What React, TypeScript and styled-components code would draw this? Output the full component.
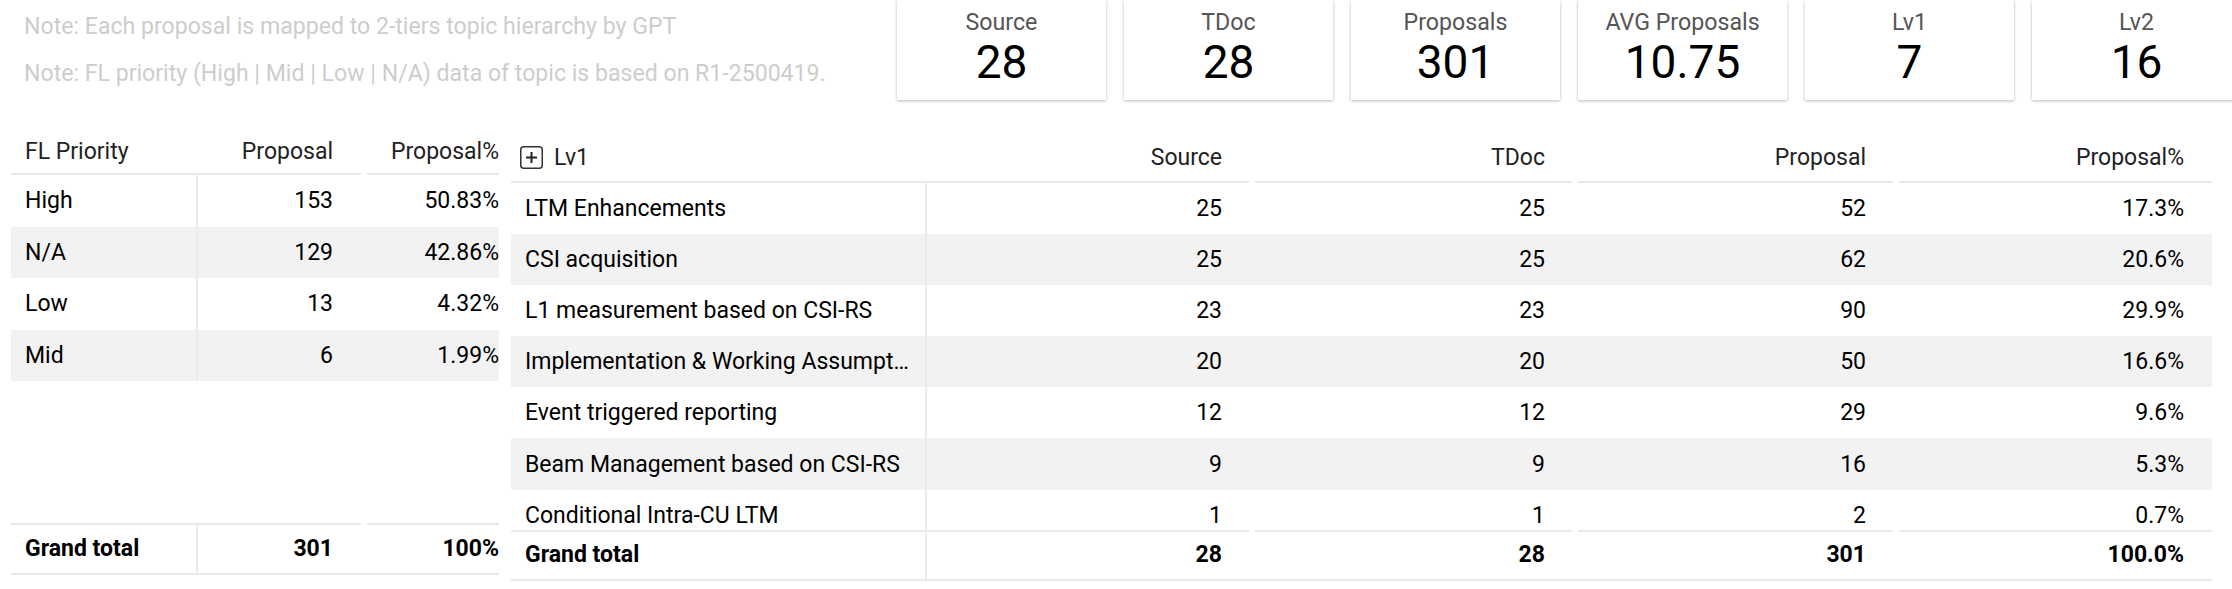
import React from "react";
import styled, { createGlobalStyle } from "styled-components";

const Global = createGlobalStyle`
  html, body { margin: 0; padding: 0; background: #ffffff; }
  body { font-family: Roboto, "Liberation Sans", Arial, sans-serif; overflow: hidden; }
`;

const Page = styled.div`
  width: 2232px;
  height: 589px;
  display: flex;
  flex-direction: column;
  overflow: hidden;
`;

const Top = styled.div`
  display: flex;
  height: 127px;
  flex-shrink: 0;
`;

const Notes = styled.div`
  width: 897px;
  flex-shrink: 0;
  box-sizing: border-box;
  padding: 13.5px 0 0 24px;
  display: flex;
  flex-direction: column;
  gap: 21.5px;
`;

const Note = styled.div`
  font-size: 23.1px;
  line-height: 26px;
  color: #cdcdcd;
  white-space: nowrap;
`;

const Cards = styled.div`
  display: flex;
  gap: 18px;
  align-items: flex-start;
`;

const Card = styled.div`
  width: 209px;
  height: 100px;
  flex-shrink: 0;
  background: #fff;
  box-shadow: 0 1px 3px rgba(0, 0, 0, 0.28);
  display: flex;
  flex-direction: column;
  align-items: center;
  box-sizing: border-box;
  padding-top: 10px;
`;

const CardTitle = styled.div`
  font-size: 23.2px;
  line-height: 24px;
  color: #555555;
  white-space: nowrap;
`;

const CardValue = styled.div`
  margin-top: 3px;
  font-size: 46px;
  line-height: 50px;
  color: #000;
`;

const Bottom = styled.div`
  display: flex;
  align-items: flex-start;
  padding-left: 11px;
  gap: 12px;
`;

const Table = styled.div<{ $w: number; $top: number }>`
  width: ${(p) => p.$w}px;
  height: 448px;
  margin-top: ${(p) => p.$top}px;
  display: flex;
  flex-direction: column;
  flex-shrink: 0;
`;

const Row = styled.div<{ $cols: string; $h: number; $stripe?: boolean; $foot?: boolean }>`
  display: grid;
  grid-template-columns: ${(p) => p.$cols};
  height: ${(p) => p.$h}px;
  flex-shrink: 0;
  box-sizing: border-box;
  background: ${(p) => (p.$stripe ? "#f2f2f2" : "#ffffff")};
  border-bottom: ${(p) => (p.$foot ? "2px solid #e9e9e9" : "none")};
`;

const Spacer = styled.div`
  flex: 1;
`;

const Viewport = styled.div`
  height: 347px;
  overflow: hidden;
  flex-shrink: 0;
`;

const HeadCell = styled.div<{ $num?: boolean; $pr: number; $gap?: boolean }>`
  display: flex;
  align-items: center;
  justify-content: ${(p) => (p.$num ? "flex-end" : "flex-start")};
  padding-left: 14px;
  padding-right: ${(p) => p.$pr}px;
  box-sizing: border-box;
  font-size: 23px;
  color: #222;
  white-space: nowrap;
  background: linear-gradient(#e9e9e9, #e9e9e9) left bottom /
    ${(p) => (p.$gap ? "calc(100% - 6px)" : "100%")} 2px no-repeat;
`;

const Cell = styled.div<{ $num?: boolean; $pr: number; $div?: boolean; $bold?: boolean; $gap?: boolean; $topLine?: boolean }>`
  display: flex;
  align-items: center;
  justify-content: ${(p) => (p.$num ? "flex-end" : "flex-start")};
  padding-left: 14px;
  padding-right: ${(p) => p.$pr}px;
  box-sizing: border-box;
  font-size: 23px;
  font-weight: ${(p) => (p.$bold ? 700 : 400)};
  color: #000;
  min-width: 0;
  border-right: ${(p) => (p.$div ? "2px solid #ececec" : "none")};
  background: ${(p) =>
    p.$topLine
      ? `linear-gradient(#e9e9e9, #e9e9e9) left top / ${p.$gap ? "calc(100% - 6px)" : "100%"} 2px no-repeat`
      : "none"};
`;

const Ellipsis = styled.span`
  overflow: hidden;
  text-overflow: ellipsis;
  white-space: nowrap;
`;

const PlusBox = styled.span`
  display: inline-flex;
  margin-left: -5px;
  margin-right: 11px;
`;

const PlusIcon = () => (
  <PlusBox>
    <svg width="23" height="23" viewBox="0 0 23 23">
      <rect x="0.75" y="0.75" width="21.5" height="21.5" rx="3" fill="none" stroke="#333" strokeWidth="1.5" />
      <line x1="6" y1="11.5" x2="17" y2="11.5" stroke="#222" strokeWidth="2" />
      <line x1="11.5" y1="6" x2="11.5" y2="17" stroke="#222" strokeWidth="2" />
    </svg>
  </PlusBox>
);

const cards = [
  { t: "Source", v: "28" },
  { t: "TDoc", v: "28" },
  { t: "Proposals", v: "301" },
  { t: "AVG Proposals", v: "10.75" },
  { t: "Lv1", v: "7" },
  { t: "Lv2", v: "16" },
];

const priority = [
  ["High", "153", "50.83%"],
  ["N/A", "129", "42.86%"],
  ["Low", "13", "4.32%"],
  ["Mid", "6", "1.99%"],
];

const topics = [
  ["LTM Enhancements", "25", "25", "52", "17.3%"],
  ["CSI acquisition", "25", "25", "62", "20.6%"],
  ["L1 measurement based on CSI-RS", "23", "23", "90", "29.9%"],
  ["Implementation & Working Assumptions", "20", "20", "50", "16.6%"],
  ["Event triggered reporting", "12", "12", "29", "9.6%"],
  ["Beam Management based on CSI-RS", "9", "9", "16", "5.3%"],
  ["Conditional Intra-CU LTM", "1", "1", "2", "0.7%"],
];

const LCOLS = "187px 169px 132px";
const RCOLS = "416px 328px 323px 321px 313px";

export default function App() {
  return (
    <Page>
      <Global />
      <Top>
        <Notes>
          <Note>Note: Each proposal is mapped to 2-tiers topic hierarchy by GPT</Note>
          <Note>Note: FL priority (High | Mid | Low | N/A) data of topic is based on R1-2500419.</Note>
        </Notes>
        <Cards>
          {cards.map((c) => (
            <Card key={c.t}>
              <CardTitle>{c.t}</CardTitle>
              <CardValue>{c.v}</CardValue>
            </Card>
          ))}
        </Cards>
      </Top>
      <Bottom>
        <Table $w={488} $top={0}>
          <Row $cols={LCOLS} $h={48}>
            <HeadCell $pr={14}>FL Priority</HeadCell>
            <HeadCell $num $gap $pr={34}>Proposal</HeadCell>
            <HeadCell $num $pr={0}>Proposal%</HeadCell>
          </Row>
          {priority.map((r, i) => (
            <Row key={r[0]} $cols={LCOLS} $h={51.5} $stripe={i % 2 === 1}>
              <Cell $div $pr={14}>{r[0]}</Cell>
              <Cell $num $pr={34}>{r[1]}</Cell>
              <Cell $num $pr={0}>{r[2]}</Cell>
            </Row>
          ))}
          <Spacer />
          <Row $cols={LCOLS} $h={52} $foot>
            <Cell $div $bold $topLine $pr={14}>Grand total</Cell>
            <Cell $num $bold $topLine $gap $pr={34}>301</Cell>
            <Cell $num $bold $topLine $pr={0}>100%</Cell>
          </Row>
        </Table>
        <Table $w={1701} $top={5.5}>
          <Row $cols={RCOLS} $h={50}>
            <HeadCell $pr={14}>
              <PlusIcon />
              Lv1
            </HeadCell>
            <HeadCell $num $gap $pr={33}>Source</HeadCell>
            <HeadCell $num $gap $pr={33}>TDoc</HeadCell>
            <HeadCell $num $gap $pr={33}>Proposal</HeadCell>
            <HeadCell $num $pr={28}>Proposal%</HeadCell>
          </Row>
          <Viewport>
            {topics.map((r, i) => (
              <Row key={r[0]} $cols={RCOLS} $h={51.2} $stripe={i % 2 === 1}>
                <Cell $div $pr={16}>
                  <Ellipsis>{r[0]}</Ellipsis>
                </Cell>
                <Cell $num $pr={33}>{r[1]}</Cell>
                <Cell $num $pr={33}>{r[2]}</Cell>
                <Cell $num $pr={33}>{r[3]}</Cell>
                <Cell $num $pr={28}>{r[4]}</Cell>
              </Row>
            ))}
          </Viewport>
          <Row $cols={RCOLS} $h={51.5} $foot>
            <Cell $div $bold $topLine $pr={14}>Grand total</Cell>
            <Cell $num $bold $topLine $gap $pr={33}>28</Cell>
            <Cell $num $bold $topLine $gap $pr={33}>28</Cell>
            <Cell $num $bold $topLine $gap $pr={33}>301</Cell>
            <Cell $num $bold $topLine $pr={28}>100.0%</Cell>
          </Row>
        </Table>
      </Bottom>
    </Page>
  );
}
